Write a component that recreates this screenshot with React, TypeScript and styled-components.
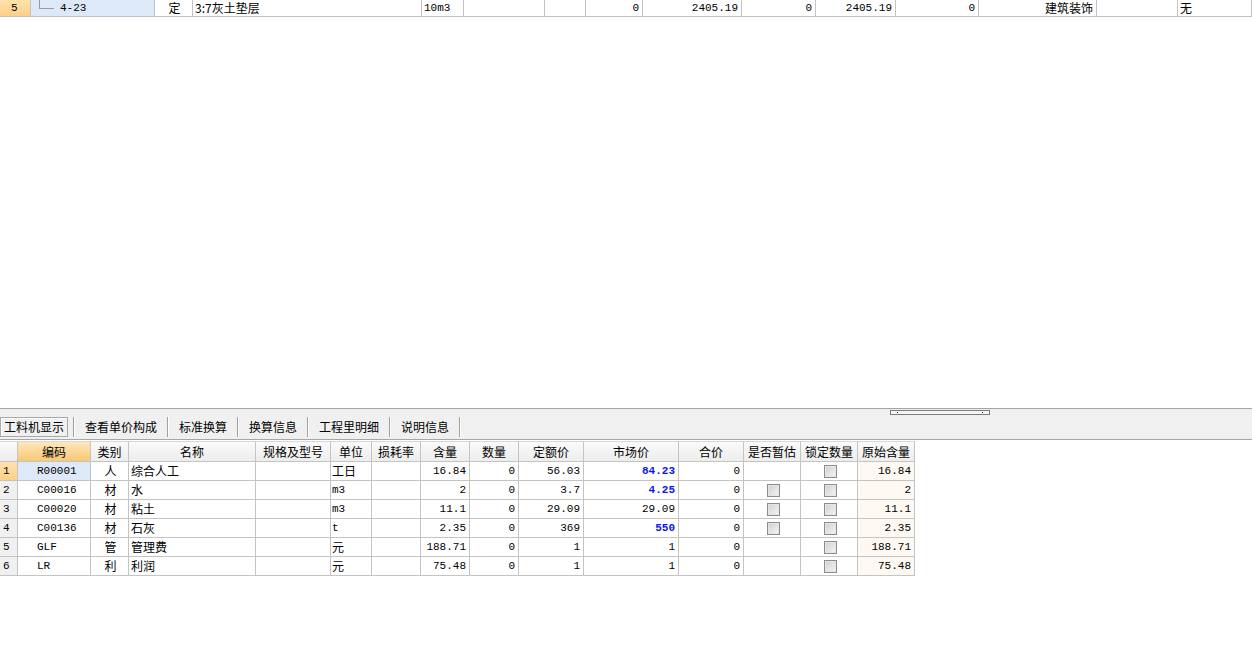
import { Fragment } from "react";
import { createGlobalStyle, styled } from "styled-components";

const GlobalStyle = createGlobalStyle`
    html, body {
        margin: 0;
        padding: 0;
        background: #ffffff;
    }
    body {
        font-family: "Noto Sans CJK SC", sans-serif;
        font-size: 12px;
        color: #000;
    }
`;

const Page = styled.div`
    display: flex;
    flex-direction: column;
    width: 1252px;
    height: 668px;
    overflow: hidden;
`;

const TopArea = styled.div`
    flex: 0 0 408px;
`;

const GridRow = styled.div<{ $cols: string; $h: number }>`
    display: grid;
    grid-template-columns: ${(p) => p.$cols};
    height: ${(p) => p.$h}px;
`;

type Align = "left" | "center" | "right";

const Cell = styled.div<{ $align?: Align; $bg?: string; $cjk?: boolean; $pad?: number; $blue?: boolean }>`
    box-sizing: border-box;
    display: flex;
    align-items: center;
    justify-content: ${(p) => (p.$align === "right" ? "flex-end" : p.$align === "center" ? "center" : "flex-start")};
    padding: ${(p) => (p.$align === "right" ? `0 ${p.$pad ?? 3}px 0 0` : `0 0 0 ${p.$pad ?? 2}px`)};
    border-right: 1px solid #c4c4c4;
    border-bottom: 1px solid #c4c4c4;
    background: ${(p) => p.$bg ?? "#ffffff"};
    font-family: ${(p) => (p.$cjk ? `"Noto Sans CJK SC", sans-serif` : `"Liberation Mono", "Noto Sans CJK SC", monospace`)};
    font-size: ${(p) => (p.$cjk ? 12 : 11)}px;
    font-weight: ${(p) => (p.$blue ? 700 : 400)};
    color: ${(p) => (p.$blue ? "#0a14f0" : "#000")};
    white-space: nowrap;
    overflow: hidden;
    line-height: 14px;
`;

const TreeLine = styled.span`
    display: inline-block;
    width: 14px;
    height: 8px;
    margin: -8px 6px 0 8px;
    border-left: 1px solid #9a9a9a;
    border-bottom: 1px solid #9a9a9a;
`;

/* ---------- bottom panel ---------- */

const Panel = styled.div`
    flex: 1;
    display: flex;
    flex-direction: column;
    border-top: 1px solid #a6a6a6;
`;

const Strip = styled.div`
    height: 30px;
    background: #f0f0f0;
    border-bottom: 1px solid #a6a6a6;
    display: flex;
    flex-direction: column;
`;

const GripRow = styled.div`
    height: 8px;
    padding-left: 890px;
    display: flex;
`;

const Grip = styled.div`
    position: relative;
    width: 98px;
    height: 3px;
    margin-top: 1px;
    border: 1px solid #7c7c7c;
    background: #f6f6f6;
    &::before, &::after {
        content: "";
        position: absolute;
        top: 1px;
        width: 1px;
        height: 1px;
        background: #101060;
    }
    &::before { left: 6px; }
    &::after { right: 6px; }
`;

const Tabs = styled.div`
    display: flex;
    height: 20px;
    align-items: stretch;
`;

const Tab = styled.div<{ $active?: boolean }>`
    display: flex;
    align-items: center;
    font-size: 12px;
    line-height: 14px;
    white-space: nowrap;
    padding: ${(p) => (p.$active ? "0 3px" : "0 10px")};
    margin-right: ${(p) => (p.$active ? "5px" : "0")};
    border: ${(p) => (p.$active ? "1px solid #a8a8a8" : "none")};
    box-shadow: ${(p) => (p.$active ? "inset 1px 1px 0 #ffffff" : "none")};
    box-sizing: border-box;
`;

const TabSep = styled.div`
    width: 1px;
    border-right: 1px solid #ffffff;
    background: #a0a0a0;
`;

const TableWrap = styled.div`
    padding-top: 1px;
    width: 915px;
`;

const HeadCell = styled.div<{ $hot?: boolean }>`
    box-sizing: border-box;
    display: flex;
    align-items: center;
    justify-content: center;
    border-right: 1px solid #c4c4c4;
    border-bottom: 1px solid #c4c4c4;
    border-top: 1px solid #d8d8d8;
    background: ${(p) => (p.$hot ? "linear-gradient(#fee8bb, #f9c874)" : "linear-gradient(#fafafa, #ededed)")};
    font-size: 12px;
    line-height: 14px;
    white-space: nowrap;
`;

const Check = styled.span`
    display: inline-block;
    box-sizing: border-box;
    width: 13px;
    height: 13px;
    border: 1px solid #8c8c8c;
    background: linear-gradient(135deg, #cfcfcf, #f6f6f6);
    box-shadow: inset 0 0 0 1px #e6e6e6;
`;

const topCols = [31, 124, 38, 229, 42, 81, 41, 57, 99, 74, 80, 83, 118, 81, 74].map((w) => `${w}px`).join(" ");
const botCols = [18, 73, 38, 127, 75, 41, 49, 49, 49, 65, 95, 65, 57, 57, 57].map((w) => `${w}px`).join(" ");

const headers = ["", "编码", "类别", "名称", "规格及型号", "单位", "损耗率", "含量", "数量", "定额价", "市场价", "合价", "是否暂估", "锁定数量", "原始含量"];

interface IRow {
    code: string;
    cat: string;
    name: string;
    unit: string;
    unitCjk: boolean;
    qty: string;
    quota: string;
    market: string;
    blue: boolean;
    est: boolean;
    orig: string;
}

const rows: IRow[] = [
    { code: "R00001", cat: "人", name: "综合人工", unit: "工日", unitCjk: true, qty: "16.84", quota: "56.03", market: "84.23", blue: true, est: false, orig: "16.84" },
    { code: "C00016", cat: "材", name: "水", unit: "m3", unitCjk: false, qty: "2", quota: "3.7", market: "4.25", blue: true, est: true, orig: "2" },
    { code: "C00020", cat: "材", name: "粘土", unit: "m3", unitCjk: false, qty: "11.1", quota: "29.09", market: "29.09", blue: false, est: true, orig: "11.1" },
    { code: "C00136", cat: "材", name: "石灰", unit: "t", unitCjk: false, qty: "2.35", quota: "369", market: "550", blue: true, est: true, orig: "2.35" },
    { code: "GLF", cat: "管", name: "管理费", unit: "元", unitCjk: true, qty: "188.71", quota: "1", market: "1", blue: false, est: false, orig: "188.71" },
    { code: "LR", cat: "利", name: "利润", unit: "元", unitCjk: true, qty: "75.48", quota: "1", market: "1", blue: false, est: false, orig: "75.48" },
];

const tabs = ["工料机显示", "查看单价构成", "标准换算", "换算信息", "工程里明细", "说明信息"];

const ORANGE = "linear-gradient(#fee3ad, #fbd088)";
const SELECT = "#dde9f8";
const GRAYNUM = "#f0f0f0";
const BEIGE = "#fdf8f1";

const App = () => {
    return (
        <Page>
            <GlobalStyle />
            <TopArea>
                <GridRow $cols={topCols} $h={17}>
                    <Cell $align="left" $pad={11} $bg={ORANGE}>5</Cell>
                    <Cell $bg={SELECT} $pad={0}><TreeLine />4-23</Cell>
                    <Cell $align="center" $cjk>定</Cell>
                    <Cell $cjk>3:7灰土垫层</Cell>
                    <Cell>10m3</Cell>
                    <Cell />
                    <Cell />
                    <Cell $align="right">0</Cell>
                    <Cell $align="right">2405.19</Cell>
                    <Cell $align="right">0</Cell>
                    <Cell $align="right">2405.19</Cell>
                    <Cell $align="right">0</Cell>
                    <Cell $align="right" $cjk>建筑装饰</Cell>
                    <Cell />
                    <Cell $cjk>无</Cell>
                </GridRow>
            </TopArea>
            <Panel>
                <Strip>
                    <GripRow><Grip /></GripRow>
                    <Tabs>
                        {tabs.map((t, i) => (
                            <Fragment key={t}>
                                <Tab $active={i === 0}>{t}</Tab>
                                <TabSep />
                            </Fragment>
                        ))}
                    </Tabs>
                </Strip>
                <TableWrap>
                    <GridRow $cols={botCols} $h={21}>
                        {headers.map((h, i) => (
                            <HeadCell key={i} $hot={i === 1}>{h}</HeadCell>
                        ))}
                    </GridRow>
                    {rows.map((r, i) => (
                        <GridRow key={r.code} $cols={botCols} $h={19}>
                            <Cell $pad={3} $bg={i === 0 ? ORANGE : GRAYNUM}>{i + 1}</Cell>
                            <Cell $pad={19} $bg={i === 0 ? SELECT : undefined}>{r.code}</Cell>
                            <Cell $align="center" $cjk>{r.cat}</Cell>
                            <Cell $cjk>{r.name}</Cell>
                            <Cell />
                            <Cell $cjk={r.unitCjk} $pad={1}>{r.unit}</Cell>
                            <Cell />
                            <Cell $align="right">{r.qty}</Cell>
                            <Cell $align="right">0</Cell>
                            <Cell $align="right">{r.quota}</Cell>
                            <Cell $align="right" $blue={r.blue}>{r.market}</Cell>
                            <Cell $align="right">0</Cell>
                            <Cell $align="center">{r.est && <Check />}</Cell>
                            <Cell $align="center"><Check /></Cell>
                            <Cell $align="right" $bg={BEIGE}>{r.orig}</Cell>
                        </GridRow>
                    ))}
                </TableWrap>
            </Panel>
        </Page>
    );
};

export default App;
